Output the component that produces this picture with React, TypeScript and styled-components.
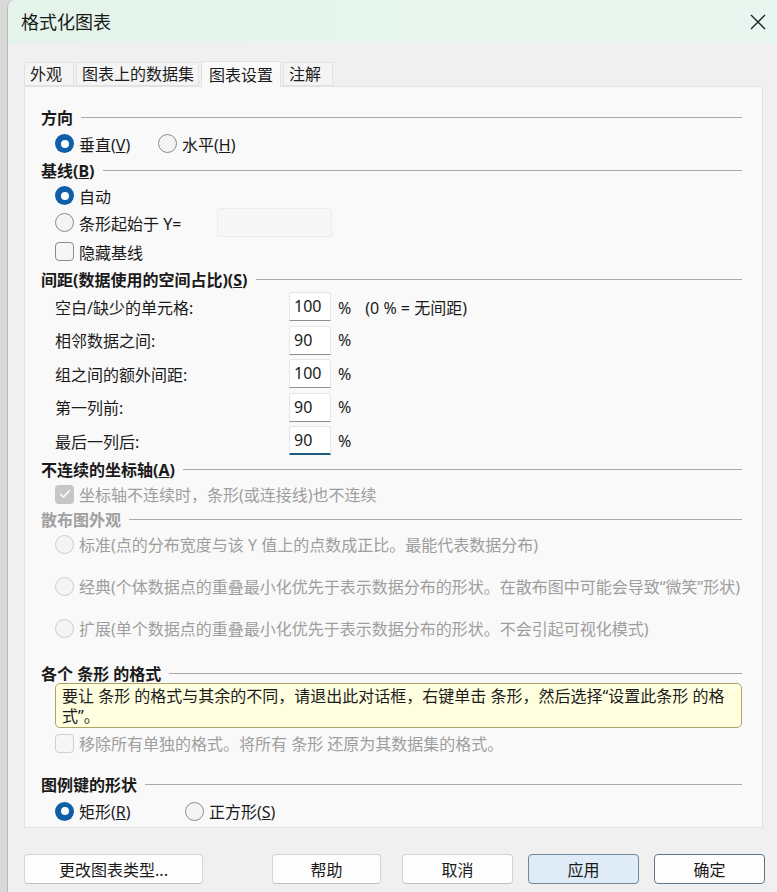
import React from "react";
import styled, { createGlobalStyle } from "styled-components";

const Global = createGlobalStyle`
  html, body { margin: 0; padding: 0; background: #d8d8d8; }
  body { font-family: "Noto Sans", "Noto Sans CJK SC", sans-serif; color: #1b1b1b; }
  * { box-sizing: border-box; }
`;

const Screen = styled.div`
  width: 777px;
  height: 892px;
  display: flex;
  overflow: hidden;
  background: #d9d9d9;
`;

const Window = styled.div`
  margin-left: 7px;
  flex: 1;
  display: flex;
  flex-direction: column;
  background: #f0f0f0;
  border-left: 1px solid #b8b8b8;
  border-top-left-radius: 8px;
  overflow: hidden;
`;

const TitleBar = styled.div`
  height: 43px;
  flex: none;
  display: flex;
  align-items: center;
  justify-content: space-between;
  padding: 0 11px 0 13px;
  background: linear-gradient(90deg, #e4f4ea, #e8f6f0);
`;

const Title = styled.div`
  font-size: 18px;
  color: #1a1a1a;
  line-height: 24px;
`;

const Body = styled.div`
  flex: 1;
  display: flex;
  flex-direction: column;
  padding: 19px 14px 0 16px;
`;

const Tabs = styled.div`
  display: flex;
  align-items: flex-end;
  height: 24px;
  position: relative;
  z-index: 1;
`;

const Tab = styled.div<{ $active?: boolean }>`
  height: ${(p) => (p.$active ? "26px" : "24px")};
  margin-bottom: ${(p) => (p.$active ? "-1px" : "0")};
  min-width: 50px;
  padding: ${(p) => (p.$active ? "0 7px" : "0 4px 0 5px")};
  margin-right: 2px;
  font-size: 16px;
  line-height: 22px;
  display: flex;
  align-items: center;
  background: ${(p) => (p.$active ? "#f9f9f9" : "#f4f4f4")};
  border: 1px solid #e2e2e2;
  border-bottom: ${(p) => (p.$active ? "none" : "1px solid #e2e2e2")};
  color: #1a1a1a;
`;

const Panel = styled.div`
  height: 742px;
  flex: none;
  border: 1px solid #e2e2e2;
  background: #f9f9f9;
  padding: 17px 20px 0 16px;
  display: flex;
  flex-direction: column;
`;

const Header = styled.div<{ $h: number; $mt?: number; $dim?: boolean }>`
  height: ${(p) => p.$h}px;
  margin-top: ${(p) => p.$mt ?? 0}px;
  flex: none;
  display: flex;
  align-items: center;
  font-size: 16px;
  font-weight: 700;
  color: ${(p) => (p.$dim ? "#a0a0a0" : "#1a1a1a")};
  white-space: nowrap;
  &::after {
    content: "";
    flex: 1;
    height: 1px;
    background: #a9a9a9;
    margin-left: 8px;
  }
`;

const Row = styled.div<{ $h: number; $mt?: number }>`
  height: ${(p) => p.$h}px;
  margin-top: ${(p) => p.$mt ?? 0}px;
  flex: none;
  display: flex;
  align-items: center;
  padding-left: 14px;
  font-size: 16px;
  white-space: nowrap;
`;

const Option = styled.label<{ $w?: number; $dim?: boolean }>`
  display: flex;
  align-items: center;
  gap: 5px;
  width: ${(p) => (p.$w ? `${p.$w}px` : "auto")};
  flex: none;
  color: ${(p) => (p.$dim ? "#9e9e9e" : "#1a1a1a")};
`;

const RadioDot = styled.span<{ $on?: boolean; $dim?: boolean }>`
  width: 19px;
  height: 19px;
  border-radius: 50%;
  flex: none;
  box-sizing: border-box;
  background: ${(p) => (p.$on ? "#0f5fa8" : "#f4f4f4")};
  border: ${(p) => (p.$on ? "none" : `1px solid ${p.$dim ? "#cdcdcd" : "#8c8c8c"}`)};
  display: flex;
  align-items: center;
  justify-content: center;
  &::after {
    content: "";
    display: ${(p) => (p.$on ? "block" : "none")};
    width: 8px;
    height: 8px;
    border-radius: 50%;
    background: #ffffff;
  }
`;

const CheckBox = styled.span<{ $on?: boolean; $dim?: boolean }>`
  width: 19px;
  height: 19px;
  border-radius: 4px;
  flex: none;
  background: ${(p) => (p.$on ? "#c6c6c6" : "#f6f6f6")};
  border: ${(p) => (p.$on ? "none" : `1px solid ${p.$dim ? "#cfcfcf" : "#8c8c8c"}`)};
  display: flex;
  align-items: center;
  justify-content: center;
`;

const TextBox = styled.div<{ $w: number; $h: number; $focus?: boolean; $disabled?: boolean }>`
  width: ${(p) => p.$w}px;
  height: ${(p) => p.$h}px;
  flex: none;
  background: ${(p) => (p.$disabled ? "#f7f7f7" : "#ffffff")};
  border: 1px solid ${(p) => (p.$disabled ? "#ececec" : "#e6e6e6")};
  border-bottom: ${(p) =>
    p.$disabled ? "1px solid #ececec" : p.$focus ? "2px solid #1d5c80" : "1px solid #8e8e8e"};
  border-radius: 3px 3px 0 0;
  font-size: 16px;
  line-height: 26px;
  padding-left: 4px;
  color: #1a1a1a;
`;

const SpacingGrid = styled.div`
  display: grid;
  grid-template-columns: 234px 42px auto;
  grid-auto-rows: 29px;
  row-gap: 4.5px;
  padding-left: 14px;
  align-items: center;
  font-size: 16px;
  flex: none;
`;

const Unit = styled.span`
  padding-left: 7px;
  white-space: nowrap;
`;

const Note = styled.span`
  margin-left: 14px;
`;

const InfoBox = styled.div`
  margin-left: 14px;
  height: 45px;
  flex: none;
  background: #ffffe0;
  border: 1px solid #aca466;
  border-radius: 5px;
  padding: 0 6px;
  font-size: 16px;
  line-height: 20px;
  display: flex;
  flex-direction: column;
  justify-content: center;
  white-space: nowrap;
  overflow: hidden;
`;

const Footer = styled.div`
  display: flex;
  align-items: center;
  margin-top: 26px;
  padding-left: 0;
`;

const Button = styled.div<{ $w: number; $ml?: number; $variant?: "apply" | "default" }>`
  width: ${(p) => p.$w}px;
  height: 30px;
  margin-left: ${(p) => p.$ml ?? 0}px;
  flex: none;
  display: flex;
  align-items: center;
  justify-content: center;
  font-size: 16px;
  border-radius: 4px;
  color: #1a1a1a;
  background: ${(p) => (p.$variant === "apply" ? "#dfecf8" : "#fdfdfd")};
  border: 1px solid
    ${(p) => (p.$variant === "apply" ? "#6f889c" : p.$variant === "default" ? "#5f7689" : "#d3d3d3")};
  border-bottom-color: ${(p) => (p.$variant ? (p.$variant === "apply" ? "#6f889c" : "#5f7689") : "#c0c0c0")};
`;

const CheckMark = () => (
  <svg width="12" height="10" viewBox="0 0 12 10">
    <path d="M1.5 5.2 L4.5 8 L10.5 1.8" fill="none" stroke="#ffffff" strokeWidth="1.5" strokeLinecap="round" strokeLinejoin="round" />
  </svg>
);

const CloseIcon = () => (
  <svg width="16" height="16" viewBox="0 0 16 16">
    <path d="M1 1 L15 15 M15 1 L1 15" stroke="#1f1f1f" strokeWidth="1.3" />
  </svg>
);

export default function App() {
  const spacing: [string, string][] = [
    ["空白/缺少的单元格:", "100"],
    ["相邻数据之间:", "90"],
    ["组之间的额外间距:", "100"],
    ["第一列前:", "90"],
    ["最后一列后:", "90"],
  ];
  return (
    <>
      <Global />
      <Screen>
        <Window>
          <TitleBar>
            <Title>格式化图表</Title>
            <CloseIcon />
          </TitleBar>
          <Body>
            <Tabs>
              <Tab>外观</Tab>
              <Tab>图表上的数据集</Tab>
              <Tab $active>图表设置</Tab>
              <Tab>注解</Tab>
            </Tabs>
            <Panel>
              <Header $h={26}>方向</Header>
              <Row $h={27}>
                <Option $w={103}>
                  <RadioDot $on />
                  <span>垂直(<u>V</u>)</span>
                </Option>
                <Option>
                  <RadioDot />
                  <span>水平(<u>H</u>)</span>
                </Option>
              </Row>
              <Header $h={26}>
                <span>基线(<u>B</u>)</span>
              </Header>
              <Row $h={25}>
                <Option>
                  <RadioDot $on />
                  <span>自动</span>
                </Option>
              </Row>
              <Row $h={29}>
                <Option $w={162}>
                  <RadioDot />
                  <span>条形起始于 Y=</span>
                </Option>
                <TextBox $w={115} $h={29} $disabled />
              </Row>
              <Row $h={29}>
                <Option>
                  <CheckBox />
                  <span>隐藏基线</span>
                </Option>
              </Row>
              <Header $h={26}>
                <span>间距(数据使用的空间占比)(<u>S</u>)</span>
              </Header>
              <SpacingGrid>
                {spacing.map(([label, value], i) => (
                  <React.Fragment key={label}>
                    <span>{label}</span>
                    <TextBox $w={42} $h={29} $focus={i === spacing.length - 1}>
                      {value}
                    </TextBox>
                    <Unit>
                      %{i === 0 && <Note>(0 % = 无间距)</Note>}
                    </Unit>
                  </React.Fragment>
                ))}
              </SpacingGrid>
              <Header $h={26} $mt={1}>
                <span>不连续的坐标轴(<u>A</u>)</span>
              </Header>
              <Row $h={24}>
                <Option $dim>
                  <CheckBox $on>
                    <CheckMark />
                  </CheckBox>
                  <span>坐标轴不连续时，条形(或连接线)也不连续</span>
                </Option>
              </Row>
              <Header $h={26} $dim>
                散布图外观
              </Header>
              <Row $h={24}>
                <Option $dim>
                  <RadioDot $dim />
                  <span>标准(点的分布宽度与该 Y 值上的点数成正比。最能代表数据分布)</span>
                </Option>
              </Row>
              <Row $h={24} $mt={18}>
                <Option $dim>
                  <RadioDot $dim />
                  <span>经典(个体数据点的重叠最小化优先于表示数据分布的形状。在散布图中可能会导致“微笑”形状)</span>
                </Option>
              </Row>
              <Row $h={24} $mt={18}>
                <Option $dim>
                  <RadioDot $dim />
                  <span>扩展(单个数据点的重叠最小化优先于表示数据分布的形状。不会引起可视化模式)</span>
                </Option>
              </Row>
              <Header $h={20} $mt={23}>
                各个 条形 的格式
              </Header>
              <InfoBox>
                <span>要让 条形 的格式与其余的不同，请退出此对话框，右键单击 条形，然后选择“设置此条形 的格</span>
                <span>式”。</span>
              </InfoBox>
              <Row $h={24} $mt={3}>
                <Option $dim>
                  <CheckBox $dim />
                  <span>移除所有单独的格式。将所有 条形 还原为其数据集的格式。</span>
                </Option>
              </Row>
              <Header $h={26} $mt={16}>
                图例键的形状
              </Header>
              <Row $h={28}>
                <Option $w={130}>
                  <RadioDot $on />
                  <span>矩形(<u>R</u>)</span>
                </Option>
                <Option>
                  <RadioDot />
                  <span>正方形(<u>S</u>)</span>
                </Option>
              </Row>
            </Panel>
            <Footer>
              <Button $w={179}>更改图表类型...</Button>
              <Button $w={109} $ml={69}>帮助</Button>
              <Button $w={111} $ml={21}>取消</Button>
              <Button $w={111} $ml={15} $variant="apply">应用</Button>
              <Button $w={111} $ml={15} $variant="default">确定</Button>
            </Footer>
          </Body>
        </Window>
      </Screen>
    </>
  );
}
